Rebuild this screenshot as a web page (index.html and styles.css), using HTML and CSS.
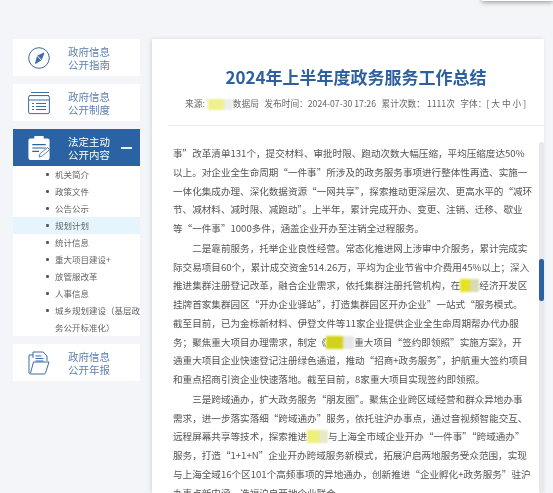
FILE: index.html
```html
<!DOCTYPE html>
<html lang="zh-CN">
<head>
<meta charset="utf-8">
<title>2024年上半年度政务服务工作总结</title>
<link rel="stylesheet" href="styles.css">
</head>
<body>
<div class="popup"></div>
<div class="layout">
  <aside class="side">
    <a class="card">
      <svg class="ico" viewBox="0 0 22 24" fill="none" stroke="#3f6ca6" stroke-width="1"><circle cx="11" cy="12" r="10.300"/><path d="M16 7 13.200 14 7.500 17.500 9.500 10Z" fill="#3f6ca6"/><path d="M9.500 10 13.200 14" stroke="#fff"/></svg>
      <span class="label">政府信息<br>公开指南</span>
    </a>
    <a class="card">
      <svg class="ico" viewBox="0 0 22 24" fill="none" stroke="#3f6ca6" stroke-width="1"><path d="M3 1.500h18M1.500 4.500h19.500"/><rect x=".6" y="4.600" width="20.800" height="18" rx="1.600"/><path d="M1 9h20M4 12.500h2M8 12.500h10M4 15.500h2M8 15.500h10M4 18.500h2M8 18.500h10"/></svg>
      <span class="label">政府信息<br>公开制度</span>
    </a>
    <div class="group">
      <a class="card active">
        <svg class="ico" viewBox="0 0 22 25" fill="#fff"><path d="M2 2.500h4V1q0-1 1-1h8q1 0 1 1v1.500h4q2 0 2 2V23q0 2-2 2H2q-2 0-2-2V4.500q0-2 2-2Z"/><path d="M4 9h14M4 12.500h14M4 16h7" stroke="#2b62a3" stroke-width="1.200"/><path d="M11 22l1-3.500 8-6.500 2 2.500-8 6.500Z" stroke="#2b62a3" stroke-width=".8"/></svg>
        <span class="label">法定主动<br>公开内容</span>
        <i class="minus"></i>
      </a>
      <ul class="sub">
        <li>机关简介</li>
        <li>政策文件</li>
        <li>公告公示</li>
        <li class="on">规划计划</li>
        <li>统计信息</li>
        <li>重大项目建设+</li>
        <li>放管服改革</li>
        <li>人事信息</li>
        <li>城乡规划建设（基层政务公开标准化）</li>
      </ul>
    </div>
    <a class="card">
      <svg class="ico" viewBox="0 0 22 24" fill="none" stroke="#3f6ca6" stroke-width="1"><path d="M5 7V1h10l4 4v5"/><path d="M7.500 5h6M7.500 7.500h8M7.500 10h8" stroke-width="1.200"/><path d="M1 22V4h4M1 22q0 1 2 1h13q1 0 1.500-1L21 11H5.500L2.500 22"/></svg>
      <span class="label">政府信息<br>公开年报</span>
    </a>
  </aside>
  <main class="panel">
    <h1 class="title">2024年上半年度政务服务工作总结</h1>
    <p class="meta">
      <span>来源: <i class="blot b-meta"></i>数据局</span>
      <span>发布时间：2024-07-30 17:26</span>
      <span>累计次数： 1111次</span>
      <span>字体：[ 大 中 小 ]</span>
    </p>
    <div class="scroll">
      <div class="text">
        <p>事”改革清单131个，提交材料、审批时限、跑动次数大幅压缩，平均压缩度达50%<br>以上。对企业全生命周期“一件事”所涉及的政务服务事项进行整体性再造、实施一<br>一体化集成办理、深化数据资源“一网共享”，探索推动更深层次、更高水平的“减环<br>节、减材料、减时限、减跑动”。上半年，累计完成开办、变更、注销、迁移、歇业<br>等“一件事”1000多件，涵盖企业开办至注销全过程服务。</p>
        <p><span class="ind"></span>二是靠前服务，托举企业良性经营。常态化推进网上涉审中介服务，累计完成实<br>际交易项目60个，累计成交资金514.26万，平均为企业节省中介费用45%以上；深入<br>推进集群注册登记改革，融合企业需求，依托集群注册托管机构，在<i class="blot b-a"></i>经济开发区<br>挂牌首家集群园区“开办企业驿站”，打造集群园区开办企业”一站式“服务模式。<br>截至目前，已为金栎新材料、伊登文件等11家企业提供企业全生命周期帮办代办服<br>务；聚焦重大项目办理需求，制定《<i class="blot b-b"></i>重大项目“签约即领照”实施方案》，开<br>通重大项目企业快速登记注册绿色通道，推动“招商+政务服务”，护航重大签约项目<br>和重点招商引资企业快速落地。截至目前，8家重大项目实现签约即领照。</p>
        <p><span class="ind"></span>三是跨域通办，扩大政务服务“朋友圈”。聚焦企业跨区域经营和群众异地办事<br>需求，进一步落实落细“跨域通办”服务，依托驻沪办事点，通过音视频智能交互、<br>远程屏幕共享等技术，探索推进<i class="blot b-c"></i>与上海全市域企业开办“一件事”“跨域通办”<br>服务，打造“1+1+N”企业开办跨域服务新模式，拓展沪启两地服务受众范围，实现<br>与上海全域16个区101个高频事项的异地通办，创新推进“企业孵化+政务服务”驻沪<br>办事点新内涵，选福沪启两地企业联合。</p>
      </div>
      <div class="track"><div class="thumb"></div></div>
    </div>
  </main>
</div>
</body>
</html>
```
FILE: styles.css
```css
* { box-sizing: border-box; }
html, body { height: 100%; }
body {
  margin: 0;
  height: 493px;
  overflow: hidden;
  background: #f4f5f8;
  font-family: "Noto Sans CJK SC", "Liberation Sans", sans-serif;
  position: relative;
}
.popup {
  position: absolute;
  top: -4px;
  right: 0;
  width: 71px;
  height: 5px;
  background: #fff;
  box-shadow: 0 1px 5px rgba(0, 0, 0, .45);
}
.layout {
  display: flex;
  gap: 12px;
  padding: 39px 0 0 13px;
  height: 100%;
  filter: blur(.3px);
}
.side {
  width: 127px;
  flex: none;
  display: flex;
  flex-direction: column;
  gap: 8px;
}
.card {
  display: flex;
  align-items: center;
  height: 37px;
  flex: none;
  background: #fff;
  padding-left: 15px;
  position: relative;
}
.ico { width: 22px; height: 24px; flex: none; }
.label {
  margin-left: 18px;
  padding-top: 1px;
  font-size: 10.500px;
  line-height: 13.500px;
  color: #5f82ae;
}
.active { background: #2b62a3; }
.active .label { color: #fff; }
.minus {
  position: absolute;
  right: 8px;
  top: 18px;
  width: 11px;
  height: 1.500px;
  background: #e8eef6;
}
.group { display: flex; flex-direction: column; background: #fff; flex: none; }
.sub {
  list-style: none;
  margin: 0;
  padding: 0;
  font-size: 8.500px;
  line-height: 17px;
  color: #666;
}
.sub li { padding-left: 42px; position: relative; }
.sub li::before {
  content: "";
  position: absolute;
  left: 33px;
  top: 7px;
  width: 2.500px;
  height: 2.500px;
  border-radius: 50%;
  background: #555;
}
.sub li.on { background: #e6f4fd; }
.panel {
  flex: 1;
  min-width: 0;
  margin-right: 9px;
  background: #fff;
  box-shadow: -1px 0 4px rgba(0, 0, 0, .12);
  padding-top: 28px;
  display: flex;
  flex-direction: column;
}
.title {
  margin: 0;
  font-size: 17px;
  line-height: 20px;
  font-weight: 700;
  text-align: center;
  color: #2e5f9e;
  padding-left: 16px;
}
.meta {
  margin: 11px 0 0 16px;
  padding: 0 0 15px 17px;
  display: flex;
  gap: 5.500px;
  white-space: nowrap;
  font-size: 8.700px;
  line-height: 12px;
  color: #666;
  border-bottom: 1px solid #eceef1;
}
.scroll {
  position: relative;
  flex: 1;
  overflow: hidden;
  padding: 18px 0 0 21px;
}
.text {
  font-size: 9.580px;
  line-height: 18.750px;
  color: #555;
  white-space: nowrap;
}
.text p { margin: 0 0 1px; }
.ind { display: inline-block; width: 2em; }
.track {
  position: absolute;
  right: 0;
  top: 16px;
  bottom: 0;
  width: 5px;
  background: #e9e9eb;
  border-radius: 2px;
}
.thumb {
  margin-top: 117px;
  height: 42px;
  background: #2b62a3;
  border-radius: 2px;
}
.blot {
  display: inline-block;
  height: 13px;
  vertical-align: -3px;
  filter: blur(1px);
}
.b-meta { width: 25px; height: 11px; margin: 0 0 0 1px; background: linear-gradient(90deg, #f0f08c 65%, #eeeeee 65%); }
.b-a { width: 19px; background: linear-gradient(90deg, #e3e322 55%, #d9d9b5 55%); }
.b-b { width: 28px; background: linear-gradient(90deg, #d2d21a 62%, #e7e7e7 62%); }
.b-c { width: 21px; background: linear-gradient(90deg, #eef07a 55%, #e9e9c8 55%); }
```
